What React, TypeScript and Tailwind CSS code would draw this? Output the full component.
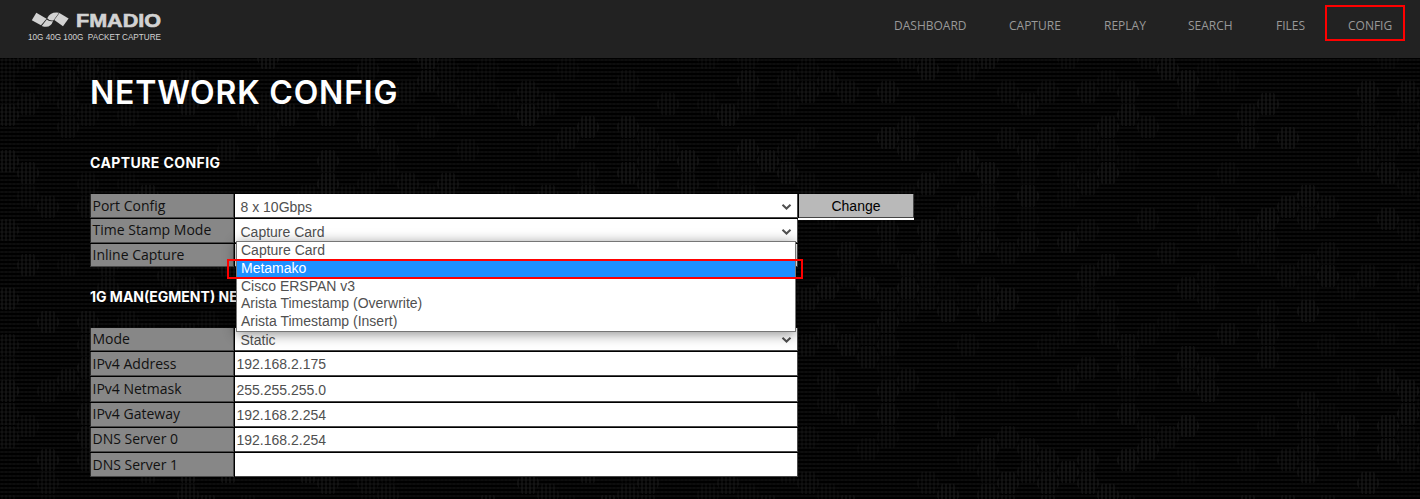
import React from "react";

const NAV = [
  { label: "DASHBOARD", cls: "w-[115px]" },
  { label: "CAPTURE", cls: "w-[95px]" },
  { label: "REPLAY", cls: "w-[84px]" },
  { label: "SEARCH", cls: "w-[88px]" },
  { label: "FILES", cls: "w-[72px]" },
  { label: "CONFIG", cls: "w-[45px]" },
];

const OPTIONS = [
  "Capture Card",
  "Metamako",
  "Cisco ERSPAN v3",
  "Arista Timestamp (Overwrite)",
  "Arista Timestamp (Insert)",
];

function cells() {
  let seed = 77;
  const rnd = () => {
    seed = (seed * 16807) % 2147483647;
    return seed / 2147483647;
  };
  const out: { x: number; y: number; o: number }[] = [];
  for (let c = 0; c < 72; c++) {
    for (let r = 0; r < 20; r++) {
      const density = 0.36 + 0.16 * Math.sin(c * 0.35 + r * 0.5);
      const hit = rnd() < density;
      const o = 0.2 + rnd() * 0.4;
      if (hit) out.push({ x: c * 20 - 4, y: r * 23 - (c % 2) * 11, o });
    }
  }
  return out;
}

function Backdrop() {
  return (
    <svg className="absolute inset-0 h-full w-full" width="1420" height="441" aria-hidden="true">
      <defs>
        <pattern id="rows" width="4" height="4" patternUnits="userSpaceOnUse">
          <rect width="4" height="4" fill="#000" />
          <rect y="1" width="4" height="2" fill="#0a0a0a" />
          <rect x="1" y="1" width="2" height="2" fill="#0d0d0d" />
        </pattern>
        <pattern id="cols" width="4" height="4" patternUnits="userSpaceOnUse">
          <rect x="1" width="2" height="4" fill="#1b1b1b" />
        </pattern>
      </defs>
      <rect width="1420" height="441" fill="url(#rows)" />
      {cells().map((p, i) => (
        <path
          key={i}
          d={`M${p.x + 6} ${p.y}h12l6 11l-6 11h-12l-6 -11z`}
          fill="url(#cols)"
          opacity={p.o}
        />
      ))}
    </svg>
  );
}

function Logo() {
  return (
    <div className="ml-[28px] mt-[11px] w-[134px] text-[#d2d2d2]">
      <div className="flex h-[18px] items-center">
        <svg className="ml-[3px] shrink-0" width="39" height="18" viewBox="0 0 39 18" fill="currentColor">
          <path d="M5.3 1.8L15.6 7.7L10 14.3L.8 9.2Z" />
          <path d="M16.2 7.2Q19.3 .6 28 1.8L22.6 9.2Q18.6 10 16.2 7.2Z" />
          <path d="M10.7 14.9L15.8 8.4Q18.2 10.8 22 10Q19.5 18 10.7 14.9Z" />
          <path d="M23.3 9.1L28.4 2L37.6 7.4L32 15.2Z" />
        </svg>
        <svg className="ml-[6px] shrink-0 overflow-visible" width="86" height="18">
          <text x="0" y="15.6" textLength="85" lengthAdjust="spacingAndGlyphs" fill="currentColor" stroke="currentColor" strokeWidth=".6" className="font-['Liberation_Sans'] text-[18px] font-bold">FMADIO</text>
        </svg>
      </div>
      <svg className="block overflow-visible" width="134" height="14">
        <text x="0" y="11" textLength="133" lengthAdjust="spacingAndGlyphs" fill="currentColor" xmlSpace="preserve" className="whitespace-pre font-['Liberation_Sans'] text-[9px]">{"10G 40G 100G  PACKET CAPTURE"}</text>
      </svg>
    </div>
  );
}

function Chevron() {
  return (
    <svg className="mr-[5px] mt-px" width="11" height="8" viewBox="0 0 11 8">
      <path d="M1.5 1.7L5.5 5.5L9.5 1.7" fill="none" stroke="#505050" strokeWidth="2" />
    </svg>
  );
}

type RowProps = { label: string; value?: string; select?: boolean; h: string; down?: boolean; lead?: string };

function Row({ label, value, select, h, down, lead = "leading-[23px]" }: RowProps) {
  return (
    <div className={`flex w-[708px] gap-px ${h}`}>
      <div className={`w-[144px] shrink-0 border-b border-l border-r border-b-[#484848] border-l-[#2a2a2a] border-r-[#484848] bg-[#878787] pl-[1.5px] font-['Open_Sans'] text-[14px] text-[#111] ${lead}`}>
        {label}
      </div>
      <div className={`flex min-w-0 flex-1 items-center justify-between border-b border-r border-[#484848] bg-white font-['Liberation_Sans'] text-[14px] leading-[20px] text-[#505050] ${select ? "pl-[5.5px]" : "pl-[1.5px]"} ${down ? "pt-[2px]" : "pt-px"}`}>
        <span>{value}</span>
        {select && <Chevron />}
      </div>
    </div>
  );
}

export default function App() {
  return (
    <div className="relative flex h-[499px] w-[1420px] flex-col overflow-hidden bg-black">
      <header className="relative flex h-[58px] shrink-0 justify-between bg-[#222]">
        <Logo />
        <nav className="mr-[27px] mt-[16px] flex font-['Open_Sans'] text-[12px] leading-[20px] text-[#999]">
          {NAV.map((n) => (
            <a key={n.label} className={`${n.cls} whitespace-nowrap`}>{n.label}</a>
          ))}
        </nav>
        <div className="absolute left-[1325px] top-[5px] h-[36px] w-[80px] border-2 border-[#f00]" />
      </header>

      <main className="relative min-h-0 flex-1 overflow-hidden">
        <Backdrop />
        <div className="relative pl-[90px] pt-[14px]">
          <h1 className="h-[42px] whitespace-nowrap font-['Inter'] text-[32px] font-semibold leading-[42px] tracking-[0.8px] text-white">NETWORK CONFIG</h1>
          <h2 className="mt-[39px] h-[20px] whitespace-nowrap font-['Inter'] text-[14px] font-bold leading-[20px] tracking-[0.42px] text-white">CAPTURE CONFIG</h2>
          <div className="mt-[21px] flex h-[73px] items-start">
            <div className="flex flex-col gap-px bg-black">
              <Row label="Port Config" value="8 x 10Gbps" select h="h-[24px]" down />
              <Row label="Time Stamp Mode" value="Capture Card" select h="h-[24px]" down lead="leading-[21px]" />
              <Row label="Inline Capture" value="" h="h-[23px]" lead="leading-[21px]" />
            </div>
            <div className="h-[26px] w-[116px] border-b-2 border-white bg-black pl-px">
              <button className="block h-[24px] w-[115px] border-b border-r border-[#444] bg-[#b9b9b9] pt-px font-['Liberation_Sans'] text-[14px] leading-[22px] text-black">Change</button>
            </div>
          </div>
          <h2 className="mt-[20px] h-[20px] whitespace-nowrap font-['Inter'] text-[14px] font-bold leading-[20px] text-white">1G MAN(EGMENT) NE</h2>
          <div className="mt-[21px] flex w-[708px] flex-col gap-px bg-black">
            <Row label="Mode" value="Static" select h="h-[23px]" lead="leading-[21px]" />
            <Row label="IPv4 Address" value="192.168.2.175" h="h-[24px]" />
            <Row label="IPv4 Netmask" value="255.255.255.0" h="h-[25px]" down lead="leading-[24px]" />
            <Row label="IPv4 Gateway" value="192.168.2.254" h="h-[24px]" lead="leading-[21px]" />
            <Row label="DNS Server 0" value="192.168.2.254" h="h-[24px]" lead="leading-[21px]" />
            <Row label="DNS Server 1" value="" h="h-[24px]" />
          </div>
        </div>
      </main>

      <ul className="absolute left-[236px] top-[241px] h-[91px] w-[560px] border border-[#767676] bg-white font-['Liberation_Sans'] text-[14px] text-[#505050] shadow-[0_2px_12px_rgba(0,0,0,0.45)]">
        {OPTIONS.map((o) => (
          <li key={o} className={`h-[17.8px] pl-[4px] leading-[17.8px] ${o === "Metamako" ? "bg-[#1e90ff] text-white" : ""}`}>{o}</li>
        ))}
      </ul>
      <div className="absolute left-[227px] top-[259px] h-[20px] w-[576px] border-2 border-[#f00]" />
    </div>
  );
}
